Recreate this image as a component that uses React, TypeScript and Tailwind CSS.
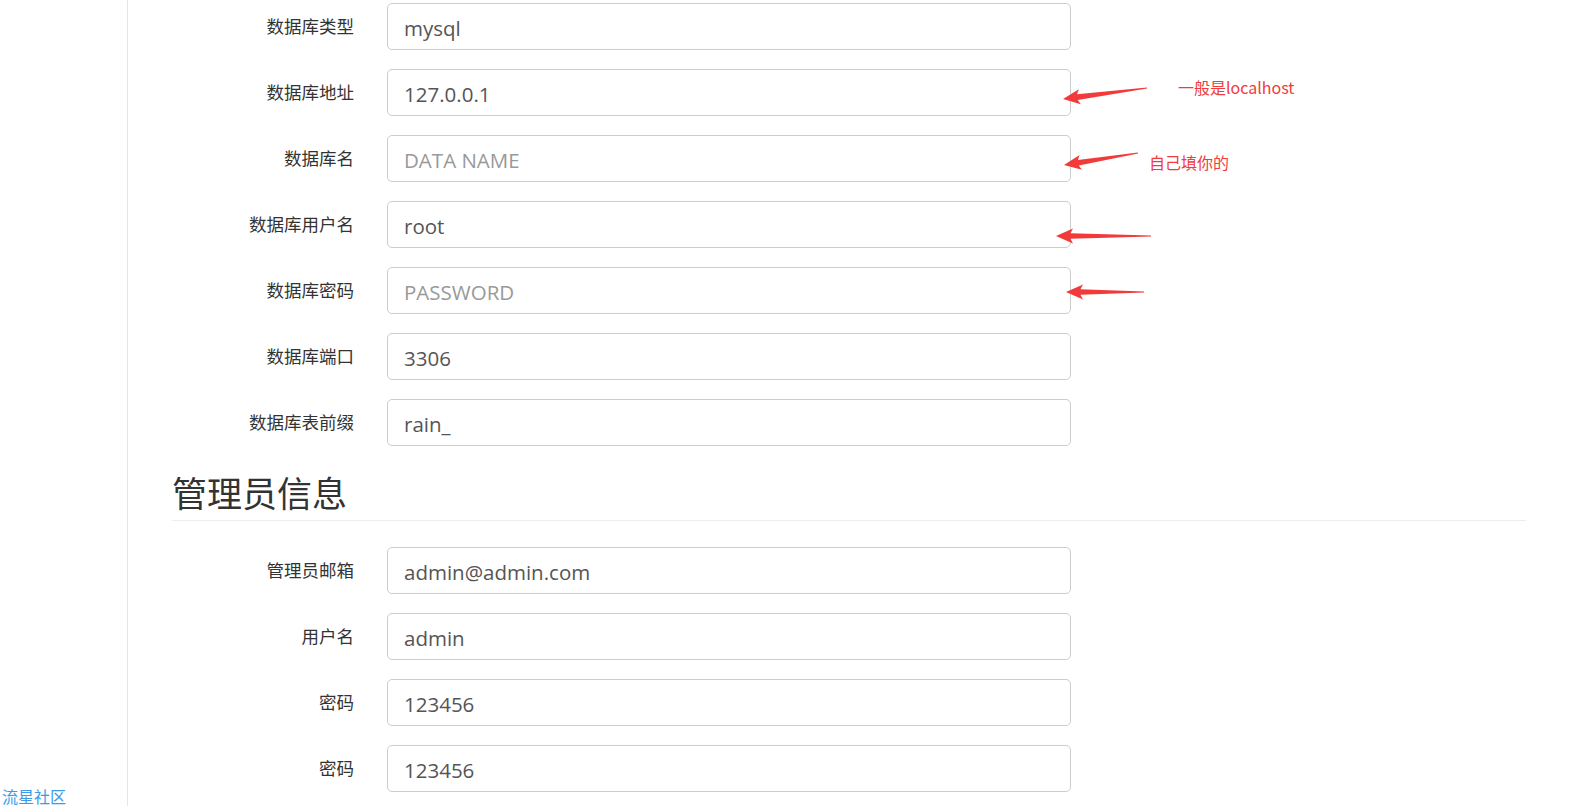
const dbRows = [
  { label: "数据库类型", value: "mysql" },
  { label: "数据库地址", value: "127.0.0.1" },
  { label: "数据库名", placeholder: "DATA NAME" },
  { label: "数据库用户名", value: "root" },
  { label: "数据库密码", placeholder: "PASSWORD" },
  { label: "数据库端口", value: "3306" },
  { label: "数据库表前缀", value: "rain_" },
];

const adminRows = [
  { label: "管理员邮箱", value: "admin@admin.com" },
  { label: "用户名", value: "admin" },
  { label: "密码", value: "123456" },
  { label: "密码", value: "123456" },
];

type Row = { label: string; value?: string; placeholder?: string };

function FormRow({ row, last }: { row: Row; last?: boolean }) {
  return (
    <div className={`flex items-center ${last ? "" : "mb-[19px]"}`}>
      <label className="w-[182px] text-right text-[17.5px] text-[#333] font-['Noto_Sans_CJK_SC',sans-serif]">
        {row.label}
      </label>
      <input
        readOnly
        defaultValue={row.value}
        placeholder={row.placeholder}
        className="ml-[33px] w-[684px] h-[47px] rounded-[5px] border border-[#ccc] bg-white px-4 pt-[2px] text-[20.5px] text-[#555] placeholder:text-[#999] font-['Open_Sans','Noto_Sans_CJK_SC',sans-serif] outline-none"
      />
    </div>
  );
}

// annotation arrows, tip first then tail
const arrows = [
  { x: 1063, y: 99, tx: 1147, ty: 88 },
  { x: 1064, y: 165, tx: 1138, ty: 153 },
  { x: 1056, y: 236, tx: 1151, ty: 236 },
  { x: 1066, y: 292, tx: 1144, ty: 292 },
];

function Arrows() {
  return (
    <svg className="absolute inset-0 pointer-events-none" width="1571" height="806">
      {arrows.map((a, i) => {
        const dx = a.tx - a.x;
        const dy = a.ty - a.y;
        const len = Math.sqrt(dx * dx + dy * dy);
        const ang = (Math.atan2(dy, dx) * 180) / Math.PI;
        return (
          <g key={i} transform={`translate(${a.x} ${a.y}) rotate(${ang})`}>
            <polygon
              fill="#f23a3a"
              points={`0,0 17,-7.5 14.5,-2.8 ${len},-0.6 ${len},0.6 14.5,2.8 17,7.5`}
            />
          </g>
        );
      })}
    </svg>
  );
}

export default function App() {
  return (
    <div className="relative flex h-[806px] overflow-hidden bg-white">
      <div className="w-[128px] shrink-0 border-r border-[#e5e5e5] flex flex-col justify-end">
        <span className="pl-[2px] text-[16px] leading-[20px] text-[#3a9be6] font-['Noto_Sans_CJK_SC',sans-serif]">
          流星社区
        </span>
      </div>
      <div className="ml-[44px] w-[1354px] pt-[3px]">
        {dbRows.map((r, i) => (
          <FormRow key={i} row={r} last={i === dbRows.length - 1} />
        ))}
        <h2 className="mt-[26px] pb-[8px] border-b border-[#eee] text-[35px] leading-[40px] text-[#333] font-['Noto_Sans_CJK_SC',sans-serif]">
          管理员信息
        </h2>
        <div className="mt-[26px]">
          {adminRows.map((r, i) => (
            <FormRow key={i} row={r} />
          ))}
        </div>
      </div>
      <Arrows />
      <span className="absolute left-[1178px] top-[76px] text-[16px] leading-[22px] text-[#f03c3c] font-['Noto_Sans_CJK_SC',sans-serif]">
        一般是localhost
      </span>
      <span className="absolute left-[1149px] top-[151px] text-[16px] leading-[22px] text-[#f03c3c] font-['Noto_Sans_CJK_SC',sans-serif]">
        自己填你的
      </span>
    </div>
  );
}
